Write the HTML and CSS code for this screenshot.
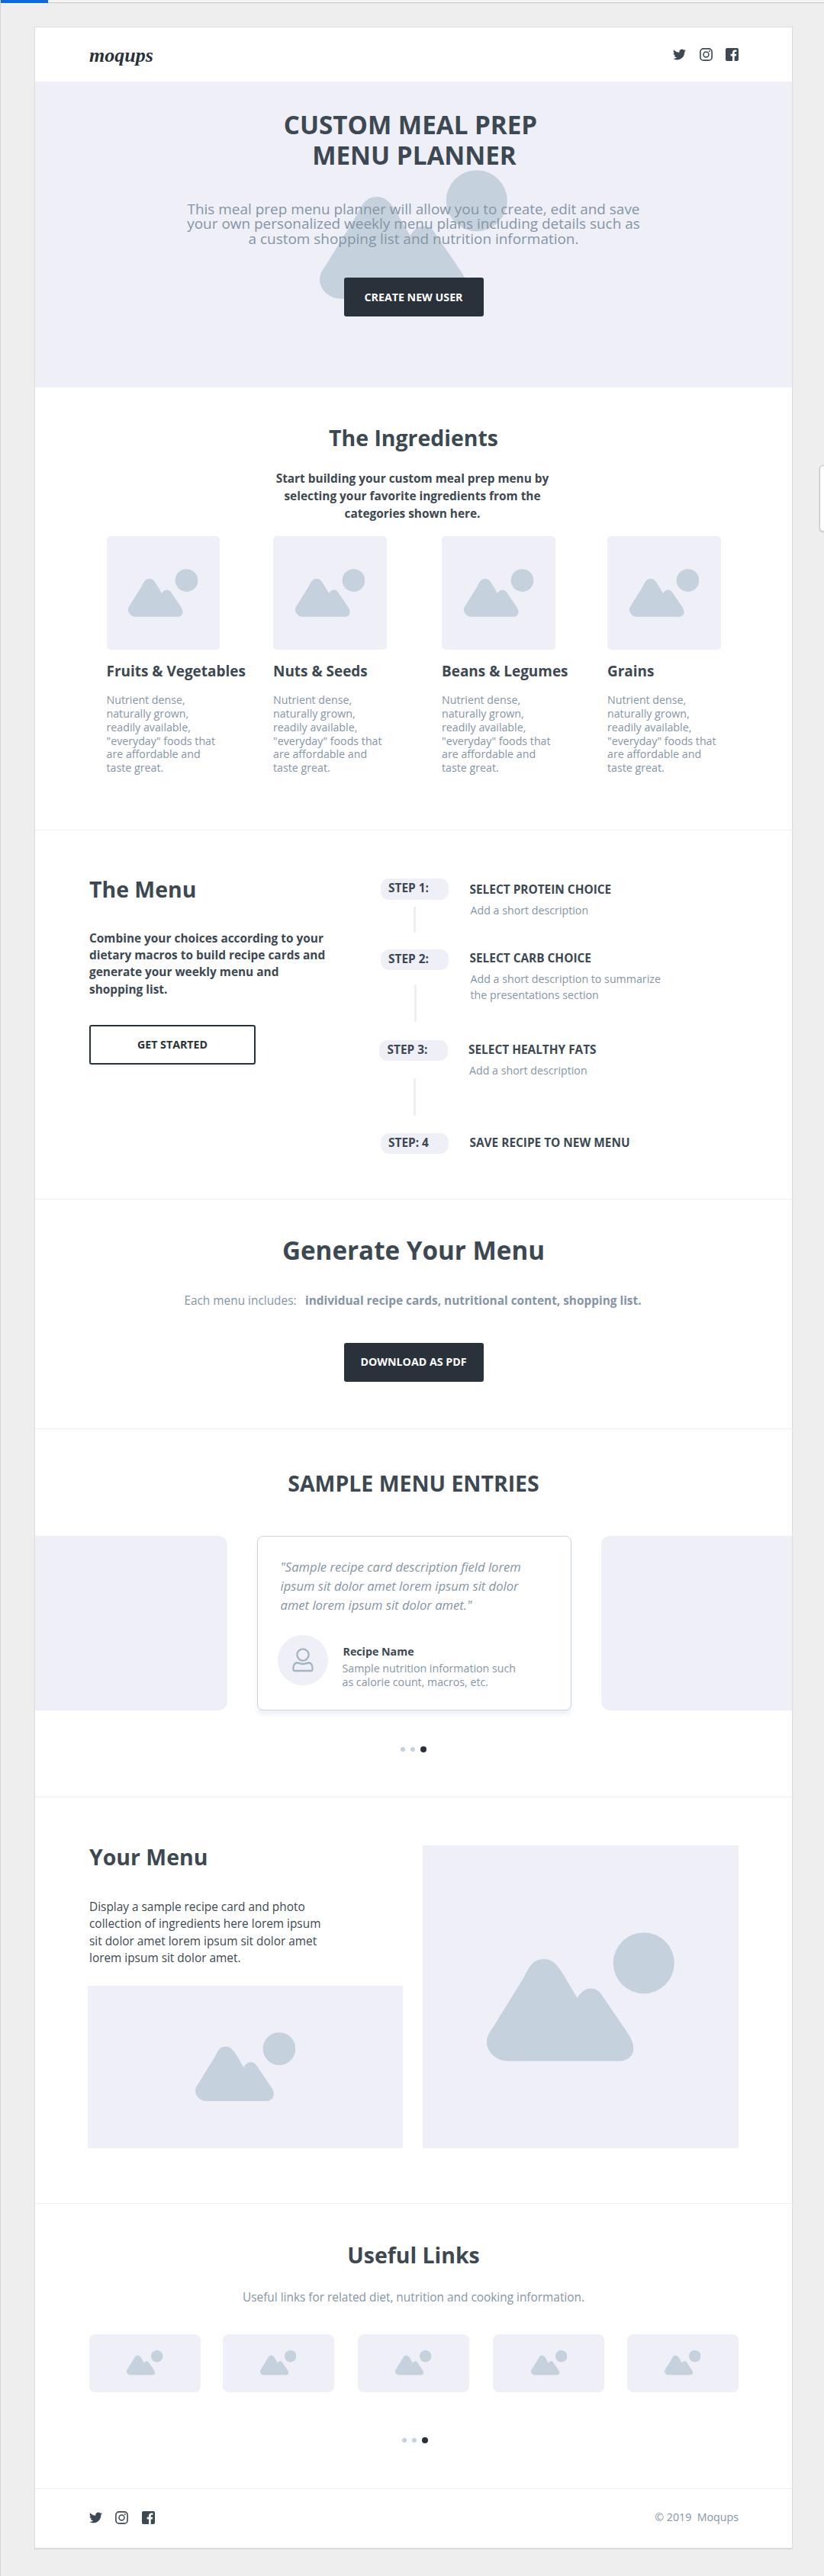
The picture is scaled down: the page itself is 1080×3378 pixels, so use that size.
FILE: index.html
```html
<!DOCTYPE html>
<html lang="en">
<head>
<meta charset="utf-8">
<title>Custom Meal Prep Menu Planner</title>
<link rel="stylesheet" href="styles.css">
</head>
<body>
<svg class="sprite" aria-hidden="true">
  <symbol id="picture" viewBox="0 0 246 169">
    <circle cx="205.8" cy="40.3" r="40"/>
    <path d="M28 168.7C6 168.7-7 147 4 131Q8 125 11 120L48 60C56 43 62 35 74.500 35S93 43 102 58L118.500 86C124 77 130 73.500 136.500 73.500S148 77 152 84L186 134C189 139 192.300 145 192.300 153C192.300 162 184 168.700 174 168.700Z"/>
  </symbol>
  <symbol id="twitter" viewBox="0 0 24 24">
    <path d="M23.950 4.570a10 10 0 0 1-2.820.770 4.960 4.960 0 0 0 2.160-2.720c-.950.550-2 .950-3.130 1.180a4.920 4.920 0 0 0-8.380 4.480C7.690 8.090 4.070 6.130 1.640 3.160a4.820 4.820 0 0 0-.670 2.480c0 1.710.870 3.210 2.190 4.100a4.900 4.900 0 0 1-2.230-.620v.060a4.920 4.920 0 0 0 3.950 4.830 5 5 0 0 1-2.210.080 4.940 4.940 0 0 0 4.600 3.420A9.870 9.870 0 0 1 0 19.540a14 14 0 0 0 7.550 2.210c9.050 0 14-7.500 14-13.980 0-.210 0-.420-.020-.630a9.940 9.940 0 0 0 2.460-2.550z"/>
  </symbol>
  <symbol id="instagram" viewBox="0 0 17 17">
    <rect x=".9" y=".9" width="15.2" height="15.2" rx="4.200" fill="none" stroke="currentColor" stroke-width="1.600"/>
    <circle cx="8.500" cy="8.500" r="3.500" fill="none" stroke="currentColor" stroke-width="1.500"/>
    <circle cx="12.900" cy="4.100" r="1"/>
  </symbol>
  <symbol id="facebook" viewBox="0 0 17 17">
    <path d="M2 0H15Q17 0 17 2V15Q17 17 15 17H11.700V10.400H13.900L14.300 7.800H11.700V6.200C11.700 5.300 12.100 4.900 13 4.900H14.400V2.600C13.900 2.500 13.200 2.400 12.400 2.400 10.300 2.400 9 3.700 9 5.900V7.800H6.700V10.400H9V17H2Q0 17 0 15V2Q0 0 2 0Z"/>
  </symbol>
</svg>

<div class="topbar"><div class="topbar-active"></div></div>
<div class="side-tab"></div>

<main class="page">
  <header class="header">
    <div class="logo">moqups</div>
    <div class="social">
      <svg class="icon"><use href="#twitter"/></svg>
      <svg class="icon"><use href="#instagram"/></svg>
      <svg class="icon"><use href="#facebook"/></svg>
    </div>
  </header>

  <section class="hero">
    <svg class="hero-picture shape"><use href="#picture"/></svg>
    <h1 class="title-xl"><span class="line-one">CUSTOM MEAL PREP</span><span class="line-two">MENU PLANNER</span></h1>
    <p class="hero-text">This meal prep menu planner will allow you to create, edit and save<br>your own personalized weekly menu plans including details such as<br>a custom shopping list and nutrition information.</p>
    <a class="button">CREATE NEW USER</a>
  </section>

  <section class="ingredients">
    <h2 class="title">The Ingredients</h2>
    <p class="lead">Start building your custom meal prep menu by<br>selecting your favorite ingredients from the<br>categories shown here.</p>
    <div class="foods">
      <article>
        <div class="placeholder food-picture"><svg class="shape"><use href="#picture"/></svg></div>
        <h3>Fruits &amp; Vegetables</h3>
        <p>Nutrient dense,<br>naturally grown,<br>readily available,<br>"everyday" foods that<br>are affordable and<br>taste great.</p>
      </article>
      <article>
        <div class="placeholder food-picture"><svg class="shape"><use href="#picture"/></svg></div>
        <h3>Nuts &amp; Seeds</h3>
        <p>Nutrient dense,<br>naturally grown,<br>readily available,<br>"everyday" foods that<br>are affordable and<br>taste great.</p>
      </article>
      <article>
        <div class="placeholder food-picture"><svg class="shape"><use href="#picture"/></svg></div>
        <h3>Beans &amp; Legumes</h3>
        <p>Nutrient dense,<br>naturally grown,<br>readily available,<br>"everyday" foods that<br>are affordable and<br>taste great.</p>
      </article>
      <article>
        <div class="placeholder food-picture"><svg class="shape"><use href="#picture"/></svg></div>
        <h3>Grains</h3>
        <p>Nutrient dense,<br>naturally grown,<br>readily available,<br>"everyday" foods that<br>are affordable and<br>taste great.</p>
      </article>
    </div>
  </section>

  <section class="menu">
    <div class="menu-intro">
      <h2 class="title">The Menu</h2>
      <p>Combine your choices according to your<br>dietary macros to build recipe cards and<br>generate your weekly menu and<br>shopping list.</p>
      <a class="button button-outline">GET STARTED</a>
    </div>
    <ol class="steps">
      <li class="step step-1">
        <div class="marker"><span class="badge">STEP 1:</span><i class="connector"></i></div>
        <div class="step-body"><h3>SELECT PROTEIN CHOICE</h3><p>Add a short description</p></div>
      </li>
      <li class="step step-2">
        <div class="marker"><span class="badge">STEP 2:</span><i class="connector"></i></div>
        <div class="step-body"><h3>SELECT CARB CHOICE</h3><p>Add a short description to summarize<br>the presentations section</p></div>
      </li>
      <li class="step step-3">
        <div class="marker"><span class="badge">STEP 3:</span><i class="connector"></i></div>
        <div class="step-body"><h3>SELECT HEALTHY FATS</h3><p>Add a short description</p></div>
      </li>
      <li class="step step-4">
        <div class="marker"><span class="badge">STEP: 4</span></div>
        <div class="step-body"><h3>SAVE RECIPE TO NEW MENU</h3></div>
      </li>
    </ol>
  </section>

  <section class="generate">
    <h2 class="title-xl">Generate Your Menu</h2>
    <p class="includes"><span>Each menu includes:</span><strong>individual recipe cards, nutritional content, shopping list.</strong></p>
    <a class="button">DOWNLOAD AS PDF</a>
  </section>

  <section class="samples">
    <h2 class="title">SAMPLE MENU ENTRIES</h2>
    <div class="carousel">
      <div class="slide slide-prev"></div>
      <article class="slide-card">
        <p class="quote">"Sample recipe card description field lorem<br>ipsum sit dolor amet lorem ipsum sit dolor<br>amet lorem ipsum sit dolor amet."</p>
        <div class="recipe">
          <div class="avatar">
            <svg viewBox="0 0 28 32" width="28" height="32"><circle cx="14" cy="9" r="7.600"/><path d="M1.500 28.500C1 23 3 19.500 6.500 19.500C9 19.500 10.500 21 14 21S19 19.500 21.500 19.500C25 19.500 27 23 26.500 28.500Q26.400 30 25 30H3Q1.600 30 1.500 28.500Z"/></svg>
          </div>
          <div class="recipe-text"><h3>Recipe Name</h3><p>Sample nutrition information such<br>as calorie count, macros, etc.</p></div>
        </div>
      </article>
      <div class="slide slide-next"></div>
    </div>
    <div class="dots"><i></i><i></i><i class="on"></i></div>
  </section>

  <section class="your-menu">
    <div class="your-left">
      <div class="your-text">
        <h2 class="title">Your Menu</h2>
        <p>Display a sample recipe card and photo<br>collection of ingredients here lorem ipsum<br>sit dolor amet lorem ipsum sit dolor amet<br>lorem ipsum sit dolor amet.</p>
      </div>
      <div class="placeholder photo-small"><svg class="shape"><use href="#picture"/></svg></div>
    </div>
    <div class="placeholder photo-large"><svg class="shape"><use href="#picture"/></svg></div>
  </section>

  <section class="links">
    <h2 class="title">Useful Links</h2>
    <p>Useful links for related diet, nutrition and cooking information.</p>
    <div class="link-list">
      <div class="placeholder"><svg class="shape"><use href="#picture"/></svg></div>
      <div class="placeholder"><svg class="shape"><use href="#picture"/></svg></div>
      <div class="placeholder"><svg class="shape"><use href="#picture"/></svg></div>
      <div class="placeholder"><svg class="shape"><use href="#picture"/></svg></div>
      <div class="placeholder"><svg class="shape"><use href="#picture"/></svg></div>
    </div>
    <div class="dots"><i></i><i></i><i class="on"></i></div>
  </section>

  <footer class="footer">
    <div class="social">
      <svg class="icon"><use href="#twitter"/></svg>
      <svg class="icon"><use href="#instagram"/></svg>
      <svg class="icon"><use href="#facebook"/></svg>
    </div>
    <div class="copyright">© 2019&nbsp; Moqups</div>
  </footer>
</main>
</body>
</html>
```
FILE: styles.css
```css
* { box-sizing: border-box; margin: 0; padding: 0; }

body {
  min-height: 3378px;
  background: #eee;
  border-left: 1px solid #d2d2d2;
  font-family: "Open Sans", "Noto Sans", sans-serif;
  color: #3c4852;
}

.sprite { position: absolute; width: 0; height: 0; }

.topbar {
  height: 4px;
  margin-left: -1px;
  background: #f5f5f5;
  border-bottom: 1px solid #ccc;
}
.topbar-active { width: 63px; height: 4px; background: #0a6be0; }

.side-tab {
  position: absolute;
  right: 0;
  top: 610px;
  width: 6px;
  height: 87px;
  background: #fff;
  border: 1px solid #c4c4c4;
  border-right: 0;
  border-radius: 5px 0 0 5px;
  box-shadow: 0 1px 2px rgba(0, 0, 0, .2);
}

.page {
  width: 992px;
  margin: 32px 0 0 45px;
  background: #fff;
  box-shadow: 0 0 0 1px #dedede, 0 1px 1px 1px #d8d8d8;
}

.page > section, .footer { box-shadow: inset 0 1px #eff0f4; }

.title { font-size: 28.44px; line-height: 38px; font-weight: 700; }
.title-xl { font-size: 33.2px; font-weight: 700; }
.shape { display: block; fill: #c5d1dc; }

.placeholder {
  display: flex;
  align-items: center;
  justify-content: center;
  background: #eeeff7;
}

.button {
  display: flex;
  align-items: center;
  justify-content: center;
  width: 183px;
  height: 51px;
  padding-bottom: 1px;
  border-radius: 3px;
  background: #29313a;
  color: #fff;
  font-size: 14.22px;
  font-weight: 700;
}
.button-outline {
  width: 218px;
  height: 52px;
  border: 2px solid #29313a;
  background: #fff;
  color: #29313a;
}

/* header and footer */
.header, .footer {
  display: flex;
  align-items: center;
  justify-content: space-between;
  padding: 0 70px 0 71px;
}
.header { height: 71px; padding-bottom: 1px; }
.logo {
  padding-top: 3px;
  font: italic 700 26px/30px "Liberation Serif", serif;
  color: #29313a;
}
.social { display: flex; align-items: center; gap: 17.4px; }
.icon { display: block; width: 17px; height: 17px; fill: currentColor; }

/* hero */
.page > .hero {
  position: relative;
  display: flex;
  flex-direction: column;
  align-items: center;
  height: 400px;
  padding-top: 37.400px;
  background: #eeeff7;
  text-align: center;
  box-shadow: none;
}
.hero > * { position: relative; }
.hero > .hero-picture {
  position: absolute;
  left: 373px;
  top: 115.600px;
  width: 246px;
  height: 169px;
}
.hero .title-xl { line-height: 39.5px; }
.hero .title-xl span { display: block; }
.line-one { padding-right: 8px; }
.line-two { padding-left: 2px; }
.hero-text { margin: 41.200px 0 40.800px; font-size: 18.95px; line-height: 19.7px; color: #8595a6; }

/* ingredients */
.ingredients { height: 581px; padding-top: 48px; text-align: center; }
.lead { margin-top: 24.400px; padding-right: 3px; font-size: 15.4px; line-height: 22.6px; font-weight: 700; }
.foods {
  display: grid;
  grid-template-columns: 218.500px 221px 217px 170px;
  margin-top: 18.200px;
  padding-left: 93.500px;
  text-align: left;
}
.food-picture { width: 148.500px; height: 148.500px; border-radius: 5px; }
.food-picture .shape { width: 91.500px; height: 63px; }
.foods h3 { margin-top: 15px; font-size: 18.96px; line-height: 26px; white-space: nowrap; }
.foods p { margin-top: 16px; font-size: 14.22px; line-height: 17.9px; color: #8595a6; }

/* menu */
.menu { display: flex; height: 483.500px; }
.menu-intro { width: 450px; padding: 58.700px 0 0 71px; }
.menu-intro p { margin: 34.900px 0 34.800px; font-size: 15.4px; line-height: 22.4px; font-weight: 700; }
.steps { list-style: none; padding: 64px 0 0 2.500px; }
.step { display: flex; gap: 27.500px; }
.step-1 { height: 92.700px; }
.step-2 { height: 119.300px; }
.step-3 { height: 121.700px; margin-left: -1.500px; }
.step-4 { height: 28px; }
.marker { width: 89.500px; }
.badge {
  display: block;
  height: 27.500px;
  padding-left: 10.500px;
  border-radius: 11px;
  background: #eeeff7;
  font-size: 15.4px;
  line-height: 26px;
  font-weight: 700;
}
.connector { display: block; width: 3px; margin-left: 43px; background: #eeeff5; }
.step-1 .connector { height: 34px; margin-top: 9.500px; }
.step-2 .connector { height: 49px; margin-top: 19px; margin-left: 44px; }
.step-3 .connector { height: 49px; margin-top: 22.500px; margin-left: 44.500px; }
.step-body { padding-top: 4px; }
.step-2 .step-body { padding-top: 1.500px; }
.step-3 .step-body, .step-4 .step-body { padding-top: 2px; }
.step h3 { font-size: 15.4px; line-height: 22px; }
.step p { margin-top: 6px; padding-left: 1px; font-size: 14.22px; line-height: 20.7px; color: #8595a6; }

/* generate */
.generate { display: flex; flex-direction: column; align-items: center; height: 301px; padding-top: 45px; }
.generate .title-xl { line-height: 45px; }
.includes { display: flex; gap: 11.500px; margin: 33.500px 2px 43.500px 0; font-size: 15.4px; line-height: 22px; color: #8595a6; }

/* sample entries */
.samples { height: 483px; padding-top: 53.500px; text-align: center; }
.carousel { display: flex; justify-content: space-between; height: 229px; margin-top: 49.500px; text-align: left; }
.slide { background: #eeeff7; }
.slide-prev { width: 252px; border-radius: 0 12px 12px 0; }
.slide-next { width: 250px; border-radius: 12px 0 0 12px; }
.slide-card {
  width: 412px;
  padding: 28.500px 0 0 29.500px;
  border: 1px solid #c9d3d9;
  border-radius: 8px;
  background: #fff;
  box-shadow: 0 6px 5px rgba(190, 205, 215, .25);
}
.quote { font-size: 16.6px; line-height: 24.8px; font-style: italic; color: #8595a6; }
.recipe { display: flex; gap: 19px; margin: 26.200px 0 0 -4px; }
.avatar {
  display: flex;
  align-items: center;
  justify-content: center;
  width: 66px;
  height: 66px;
  padding-left: 1px;
  border-radius: 50%;
  background: #eeeff7;
}
.avatar svg { fill: none; stroke: #a5b4c1; stroke-width: 2.300; }
.recipe-text { padding-top: 12.200px; }
.recipe h3 { padding-left: 1px; font-size: 14.22px; line-height: 20px; }
.recipe p { margin-top: 2.800px; font-size: 14.22px; line-height: 18px; color: #8595a6; }
.dots { display: flex; justify-content: center; align-items: center; gap: 7px; height: 8px; margin-top: 47.500px; }
.dots i { width: 6px; height: 6px; border-radius: 50%; background: #c5d1dc; }
.dots .on { width: 8px; height: 8px; background: #29313a; }

/* your menu */
.your-menu { display: flex; justify-content: space-between; height: 533px; padding: 60.700px 70.500px 0 69px; }
.your-left { width: 413px; }
.your-text { padding-left: 2px; }
.your-text p { margin-top: 35.600px; font-size: 15.4px; line-height: 22.4px; }
.photo-small { height: 213.500px; margin-top: 24.200px; }
.photo-small .shape { width: 131.500px; height: 90.500px; }
.photo-large { width: 413.500px; height: 397px; margin-top: 4px; }
.photo-large .shape { width: 246px; height: 169px; }

/* links */
.links { height: 374px; padding-top: 49.700px; text-align: center; }
.links p { margin-top: 25.700px; font-size: 15.4px; line-height: 22px; color: #8595a6; }
.link-list {
  display: grid;
  grid-template-columns: 174.700px 177.300px 177.300px 175.400px 146px;
  margin: 36.800px 0 0 71px;
}
.link-list .placeholder { width: 146px; height: 76px; border-radius: 8px; }
.link-list .shape { width: 47.500px; height: 32.700px; }
.links .dots { margin-top: 59.700px; padding-left: 3px; }

.footer { height: 78.500px; }
.copyright { padding-bottom: 2px; font-size: 14.22px; color: #8595a6; }
```
